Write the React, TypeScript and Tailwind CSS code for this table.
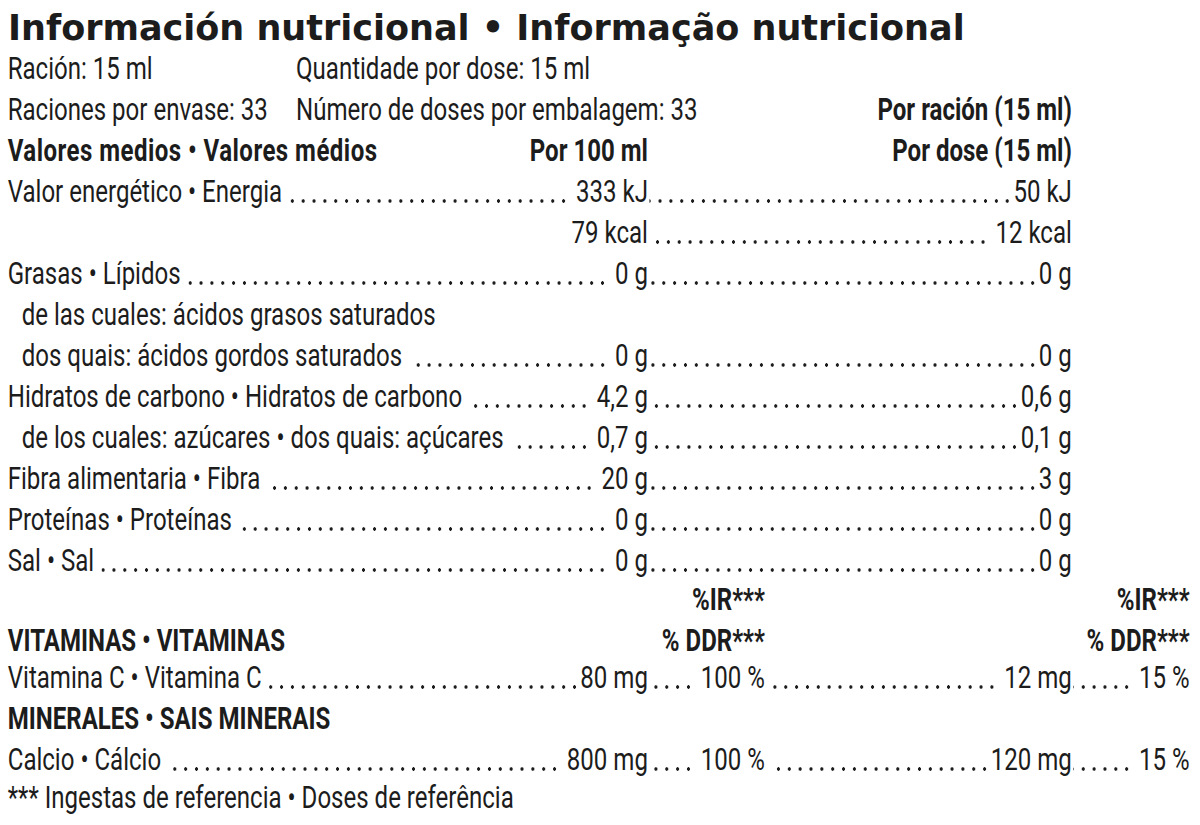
import React from "react";

// dot leader that fills the free space between a label and a value
const Dots = ({ gap }: { gap?: "both" | "left" | "right" | "none" }) => {
  const g = gap ?? "both";
  const left = g === "both" || g === "left" ? "ml-[10px]" : "ml-[2px]";
  const right = g === "both" || g === "right" ? "mr-[9px]" : "mr-[1px]";
  return (
    <span
      className={
        "min-w-0 flex-1 bg-[radial-gradient(circle_at_7px_30px,#1c1c1c_1.6px,transparent_2.1px)] bg-[length:14px_41px] bg-right bg-repeat-x " +
        left +
        " " +
        right
      }
    />
  );
};

type RowProps = {
  label?: string;
  a?: string;
  c?: string;
  indent?: boolean;
  noLead?: boolean;
  className?: string;
};

const Row = (props: RowProps) => (
  <div className={"flex " + (props.className ?? "")}>
    <div className={"flex w-[826px] " + (props.indent ? "pl-[18px]" : "")}>
      <span className="whitespace-nowrap">{props.label}</span>
      {props.a !== undefined && !props.noLead && <Dots />}
      {props.noLead && <span className="flex-1" />}
      {props.a !== undefined && <span className="whitespace-nowrap">{props.a}</span>}
    </div>
    {props.c !== undefined && (
      <div className="flex w-[547px]">
        <Dots gap={props.noLead ? "right" : "none"} />
        <span className="whitespace-nowrap">{props.c}</span>
      </div>
    )}
  </div>
);

type VitProps = {
  label: string;
  a: string;
  ir: string;
  c: string;
  ir2: string;
  className?: string;
};

const VitRow = (props: VitProps) => (
  <div className={"flex " + (props.className ?? "")}>
    <div className="flex w-[826px]">
      <span className="whitespace-nowrap">{props.label}</span>
      <Dots gap={props.label.startsWith("Calcio") ? "both" : "none"} />
      <span className="whitespace-nowrap">{props.a}</span>
    </div>
    <div className="flex w-[151px]">
      <Dots gap="right" />
      <span className="whitespace-nowrap">{props.ir}</span>
    </div>
    <div className="flex w-[396px]">
      <Dots gap={props.c === "12 mg" ? "both" : "left"} />
      <span className="whitespace-nowrap">{props.c}</span>
    </div>
    <div className="flex w-[152px]">
      <Dots gap="right" />
      <span className="whitespace-nowrap">{props.ir2}</span>
    </div>
  </div>
);

export default function App() {
  return (
    <div className="h-[825px] w-[1200px] overflow-hidden bg-white text-[#1c1c1c]">
      <h1 className="pl-[8px] pt-[8px] font-['DejaVu_Sans',sans-serif] text-[35px] leading-[40px] font-bold whitespace-nowrap">
        Información nutricional • Informação nutricional
      </h1>

      <div className="w-[1540px] origin-top-left scale-x-[0.775] pl-[10px] font-['Roboto',sans-serif] text-[31px] leading-[41px]">
        <div className="flex">
          <span className="w-[372px] whitespace-nowrap">Ración: 15 ml</span>
          <span className="whitespace-nowrap">Quantidade por dose: 15 ml</span>
        </div>
        <div className="flex w-[1373px]">
          <span className="w-[372px] whitespace-nowrap">Raciones por envase: 33</span>
          <span className="whitespace-nowrap">Número de doses por embalagem: 33</span>
          <span className="ml-auto font-bold whitespace-nowrap">Por ración (15 ml)</span>
        </div>
        <div className="flex font-bold">
          <div className="flex w-[826px] justify-between">
            <span className="tracking-[0.6px] whitespace-nowrap">Valores medios • Valores médios</span>
            <span className="whitespace-nowrap">Por 100 ml</span>
          </div>
          <div className="w-[547px] text-right whitespace-nowrap">Por dose (15 ml)</div>
        </div>

        <Row label="Valor energético • Energia" a="333 kJ" c="50 kJ" />
        <Row a="79 kcal" c="12 kcal" noLead />
        <Row label="Grasas • Lípidos" a="0 g" c="0 g" />
        <Row label="de las cuales: ácidos grasos saturados" indent />
        <Row label="dos quais: ácidos gordos saturados" a="0 g" c="0 g" indent />
        <Row label="Hidratos de carbono • Hidratos de carbono" a="4,2 g" c="0,6 g" />
        <Row label="de los cuales: azúcares • dos quais: açúcares" a="0,7 g" c="0,1 g" indent />
        <Row label="Fibra alimentaria • Fibra" a="20 g" c="3 g" />
        <Row label="Proteínas • Proteínas" a="0 g" c="0 g" />
        <Row label="Sal • Sal" a="0 g" c="0 g" />

        <div className="mt-[-2px] flex font-bold">
          <div className="w-[826px]" />
          <div className="w-[151px] text-right whitespace-nowrap">%IR***</div>
          <div className="w-[396px]" />
          <div className="w-[152px] text-right whitespace-nowrap">%IR***</div>
        </div>
        <div className="flex font-bold">
          <div className="w-[826px] whitespace-nowrap">VITAMINAS • VITAMINAS</div>
          <div className="w-[151px] text-right whitespace-nowrap">% DDR***</div>
          <div className="w-[396px]" />
          <div className="w-[152px] text-right whitespace-nowrap">% DDR***</div>
        </div>
        <VitRow className="mt-[-4px]" label="Vitamina C • Vitamina C" a="80 mg" ir="100 %" c="12 mg" ir2="15 %" />
        <div className="font-bold whitespace-nowrap">MINERALES • SAIS MINERAIS</div>
        <VitRow label="Calcio • Cálcio" a="800 mg" ir="100 %" c="120 mg" ir2="15 %" />
        <div className="mt-[-3px] whitespace-nowrap">*** Ingestas de referencia • Doses de referência</div>
      </div>
    </div>
  );
}
